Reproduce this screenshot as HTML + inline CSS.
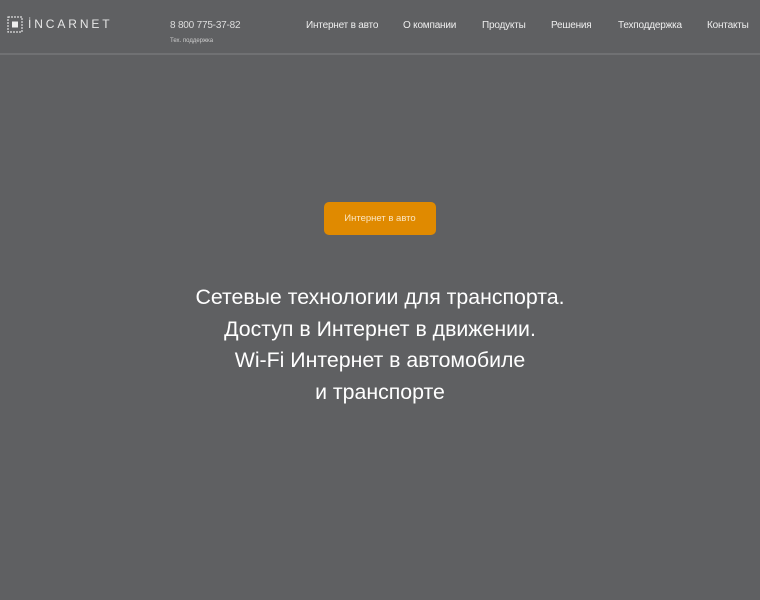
<!DOCTYPE html>
<html><head><meta charset="utf-8"><style>
html,body{margin:0;padding:0;}
body{width:760px;height:600px;background:#5f6062;font-family:"Liberation Sans",sans-serif;color:#fff;position:relative;overflow:hidden;}
.hdr{position:absolute;left:0;top:0;width:760px;height:53px;border-bottom:2px solid #707173;}
.logo{position:absolute;left:6px;top:15px;}
.brand{position:absolute;left:28px;top:17px;font-size:12px;letter-spacing:2.9px;color:#e6e6e6;}
.phone{position:absolute;left:170px;top:20px;font-size:10px;letter-spacing:-0.2px;color:#ddd;}
.sub{position:absolute;left:170px;top:38px;font-size:6px;color:#ccc;}
.nav a{position:absolute;top:20px;font-size:10px;letter-spacing:-0.2px;color:#eee;text-decoration:none;}
.btn{position:absolute;left:324px;top:202px;width:112px;height:33px;background:#e08a00;border-radius:5px;font-size:9.5px;color:#fbe6c2;text-align:center;line-height:33px;}
.hero{position:absolute;left:0;top:282px;width:760px;text-align:center;font-size:21.3px;line-height:31.5px;color:#fff;}
</style></head><body>
<div class="hdr">
<svg class="logo" width="18" height="20" viewBox="0 0 18 20"><rect x="2" y="2" width="14" height="15" fill="none" stroke="#ddd" stroke-width="1.2" stroke-dasharray="2 1"/><rect x="6" y="6.5" width="6" height="6" fill="#eee"/></svg>
<div class="brand">İNCARNET</div>
<div class="phone">8 800 775-37-82</div>
<div class="sub">Тех. поддержка</div>
<div class="nav">
<a style="left:306px">Интернет в авто</a>
<a style="left:403px">О компании</a>
<a style="left:482px">Продукты</a>
<a style="left:551px">Решения</a>
<a style="left:618px">Техподдержка</a>
<a style="left:707px">Контакты</a>
</div>
</div>
<div class="btn">Интернет в авто</div>
<div class="hero">Сетевые технологии для транспорта.<br>Доступ в Интернет в движении.<br>Wi-Fi Интернет в автомобиле<br>и транспорте</div>
</body></html>
